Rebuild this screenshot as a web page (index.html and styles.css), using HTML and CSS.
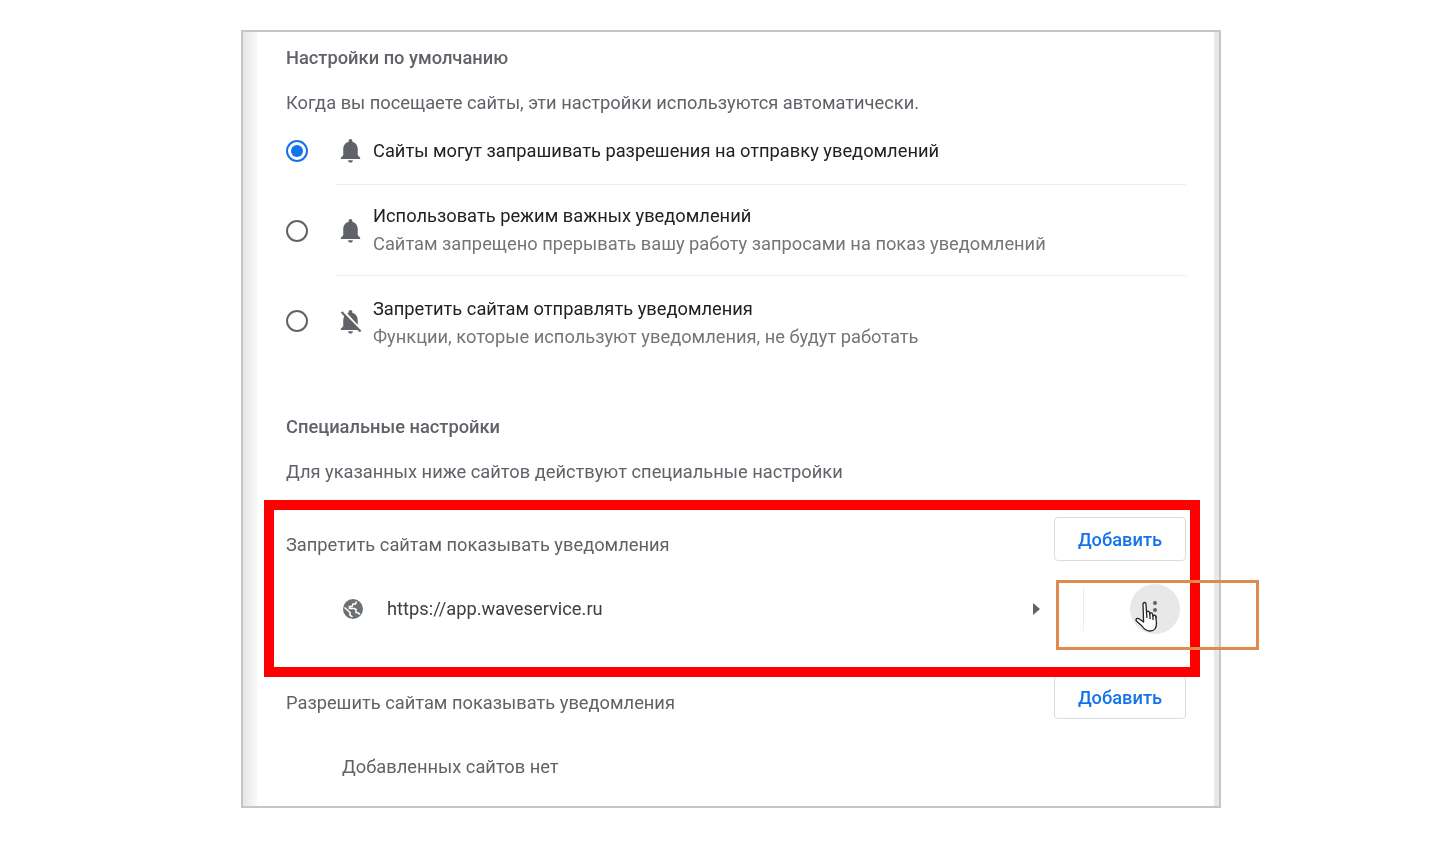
FILE: index.html
```html
<!DOCTYPE html>
<html lang="ru">
<head>
<meta charset="utf-8">
<title>Настройки уведомлений</title>
<link rel="stylesheet" href="styles.css">
</head>
<body>
<div class="frame">
  <div class="strip-left"></div>
  <main class="content">
    <h2 class="heading first">Настройки по умолчанию</h2>
    <p class="desc">Когда вы посещаете сайты, эти настройки используются автоматически.</p>

    <div class="option option-one">
      <span class="radio checked"></span>
      <div class="option-body">
        <svg class="bell" viewBox="0 0 24 24"><path d="M12 22c1.1 0 2-.9 2-2h-4c0 1.1.89 2 2 2zm6-6v-5c0-3.07-1.64-5.64-4.5-6.32V4c0-.83-.67-1.5-1.5-1.5s-1.5.67-1.5 1.5v.68C7.63 5.36 6 7.92 6 11v5l-2 2v1h16v-1l-2-2z"/></svg>
        <div class="option-text"><div class="primary">Сайты могут запрашивать разрешения на отправку уведомлений</div></div>
      </div>
    </div>
    <div class="option option-two">
      <span class="radio"></span>
      <div class="option-body">
        <svg class="bell" viewBox="0 0 24 24"><path d="M12 22c1.1 0 2-.9 2-2h-4c0 1.1.89 2 2 2zm6-6v-5c0-3.07-1.64-5.64-4.5-6.32V4c0-.83-.67-1.5-1.5-1.5s-1.5.67-1.5 1.5v.68C7.63 5.36 6 7.92 6 11v5l-2 2v1h16v-1l-2-2z"/></svg>
        <div class="option-text">
          <div class="primary">Использовать режим важных уведомлений</div>
          <div class="secondary">Сайтам запрещено прерывать вашу работу запросами на показ уведомлений</div>
        </div>
      </div>
    </div>
    <div class="option option-three">
      <span class="radio"></span>
      <div class="option-body last">
        <svg class="bell" viewBox="0 0 24 24"><path d="M20 18.69L7.84 6.14 5.27 3.49 4 4.76l2.8 2.8v.01c-.52.99-.8 2.16-.8 3.42v5l-2 2v1h13.73l2 2L21 19.72l-1-1.03zM12 22c1.11 0 2-.89 2-2h-4c0 1.11.89 2 2 2zm6-7.32V11c0-3.08-1.64-5.64-4.5-6.32V4c0-.83-.67-1.5-1.5-1.5s-1.5.67-1.5 1.5v.68c-.15.03-.29.08-.42.12-.1.03-.2.07-.3.11h-.01c-.2.08-.4.17-.59.27-.01 0-.01 0-.02.01L18 14.68z"/></svg>
        <div class="option-text">
          <div class="primary">Запретить сайтам отправлять уведомления</div>
          <div class="secondary">Функции, которые используют уведомления, не будут работать</div>
        </div>
      </div>
    </div>

    <h2 class="heading special">Специальные настройки</h2>
    <p class="desc">Для указанных ниже сайтов действуют специальные настройки</p>

    <section class="block block-block">
      <div class="block-head">
        <span class="block-label">Запретить сайтам показывать уведомления</span>
        <button class="add">Добавить</button>
      </div>
      <div class="site">
        <svg class="globe" viewBox="0 0 24 24"><circle cx="12" cy="12" r="10"/><path class="swoosh" d="M3.5 10.5L9 15.5V18L11.5 20M19 17.5C18 16 17 15.5 15 15.5V12.5L13.5 11.5H8.5V9.5H11L12 7H14.5L15.5 4.5"/></svg>
        <span class="url">https://app.waveservice.ru</span>
        <span class="arrow"></span>
        <span class="vsep"></span>
        <span class="more">
          <span class="dots"><i></i><i></i><i></i></span>
          <svg class="hand" viewBox="0 0 23 31"><path d="M8 3C8 1 11 1 11 3L11.5 11.5C12 10 14 9.5 14.5 11.5L14.8 13C15.5 11.5 17.3 11.5 17.6 13.5L17.9 15C18.6 13.6 20.6 13.8 20.8 16L21.5 22C21.5 26 20 30 15 30C11 30 9 28 7 25L1.4 20C0.2 18 2.6 16.4 4.4 18L8.6 21Z"/><path d="M11.5 11.5L12 17M14.8 13L15.1 18M17.9 15L18.1 19"/></svg>
        </span>
      </div>
    </section>

    <section class="block block-allow">
      <div class="block-head">
        <span class="block-label">Разрешить сайтам показывать уведомления</span>
        <button class="add">Добавить</button>
      </div>
      <div class="empty">Добавленных сайтов нет</div>
    </section>
  </main>
  <div class="strip-right"></div>
  <div class="mark mark-red"></div>
  <div class="mark mark-orange"></div>
</div>
</body>
</html>
```
FILE: styles.css
```css
* { box-sizing: border-box; }
html, body { margin: 0; background: #fff; }
body { padding: 30px 0 0 241px; height: 848px; overflow: hidden; font-family: Roboto, "Noto Sans", sans-serif; }

.frame {
  position: relative;
  display: flex;
  width: 980px;
  height: 778px;
  border: 2px solid #c6c6c6;
  background: #fff;
}
.strip-left { width: 15px; flex: none; background: linear-gradient(90deg, #e6e6e6, #fbfbfb); }
.strip-right { width: 5px; flex: none; margin-left: auto; background: #e8e8e8; }
.content { flex: 1; padding: 0 28px; min-width: 0; filter: blur(0.45px); }

.heading { margin: 0; font-size: 18.3px; font-weight: 500; color: #5f6368; height: 26px; line-height: 26px; }
.heading.first { margin-top: 13px; }
.heading.special { margin-top: 48px; }
.desc { margin: 0; font-size: 18.3px; color: #5f6368; height: 26px; line-height: 26px; }
.heading.first + .desc { margin-top: 19px; }
.heading.special + .desc { margin-top: 19px; }

.option { display: flex; align-items: center; }
.option-one { height: 69px; }
.option-two { height: 91px; }
.option-three { height: 90px; }
.option-one .option-text { padding-top: 2px; }
.option-three .option-text { padding-top: 4px; }
.option-body { flex: 1; align-self: stretch; display: flex; align-items: center; gap: 8px; margin-left: 28px; border-bottom: 1px solid #eeeeee; }
.option-body.last { border-bottom: 0; }
.bell { width: 29px; height: 29px; flex: none; fill: #5f6368; }
.primary { font-size: 18.3px; line-height: 28px; color: #202124; }
.secondary { font-size: 18.3px; line-height: 28px; color: #757575; }

.radio { width: 22px; height: 22px; flex: none; border: 2.5px solid #5f6368; border-radius: 50%; position: relative; }
.radio.checked { border-color: #1273eb; }
.radio.checked::after { content: ""; position: absolute; inset: 3px; border-radius: 50%; background: #1273eb; }

.block-head { display: flex; justify-content: space-between; }
.block-label { font-size: 18.3px; line-height: 26px; color: #5f6368; padding-top: 15px; }
.block-block { margin-top: 32px; }
.block-allow { margin-top: 34px; }
.add {
  width: 132px; height: 44px; padding: 0; background: #fff;
  border: 1px solid #dadce0; border-radius: 4px;
  font: 500 18.3px Roboto, sans-serif; color: #1273eb;
}
.site { display: flex; align-items: center; height: 64px; margin-top: 16px; padding: 0 6px 0 55px; }
.globe { width: 24px; height: 24px; flex: none; fill: #6b7075; }
.swoosh { fill: none; stroke: #fff; stroke-width: 1.6; }
.url { margin-left: 22px; padding-bottom: 2px; font-size: 18.3px; color: #3c4043; flex: 1; }
.arrow { width: 0; height: 0; border-left: 7px solid #5f6368; border-top: 6px solid transparent; border-bottom: 6px solid transparent; }
.vsep { width: 1px; height: 44px; background: #eeeeee; margin: 0 46px 0 43px; }
.more { position: relative; width: 50px; height: 50px; border-radius: 50%; background: #e8e8e8; display: flex; align-items: center; justify-content: center; }
.dots { display: flex; flex-direction: column; gap: 3px; margin-top: 1px; }
.dots i { display: block; width: 4px; height: 4px; border-radius: 50%; background: #5f6368; }
.hand { position: absolute; left: 5px; top: 17px; width: 23px; height: 31px; fill: #fff; stroke: #222; stroke-width: 1.3; stroke-linejoin: round; }
.empty { height: 64px; margin-top: 16px; padding-left: 56px; font-size: 18.3px; line-height: 64px; color: #5f6368; }

.mark { position: absolute; pointer-events: none; }
.mark-red { left: 21px; top: 468px; width: 936px; height: 177px; border: 10px solid #ff0000; }
.mark-orange { left: 813px; top: 548px; width: 203px; height: 70px; border: 3px solid #df8a4e; }
```
